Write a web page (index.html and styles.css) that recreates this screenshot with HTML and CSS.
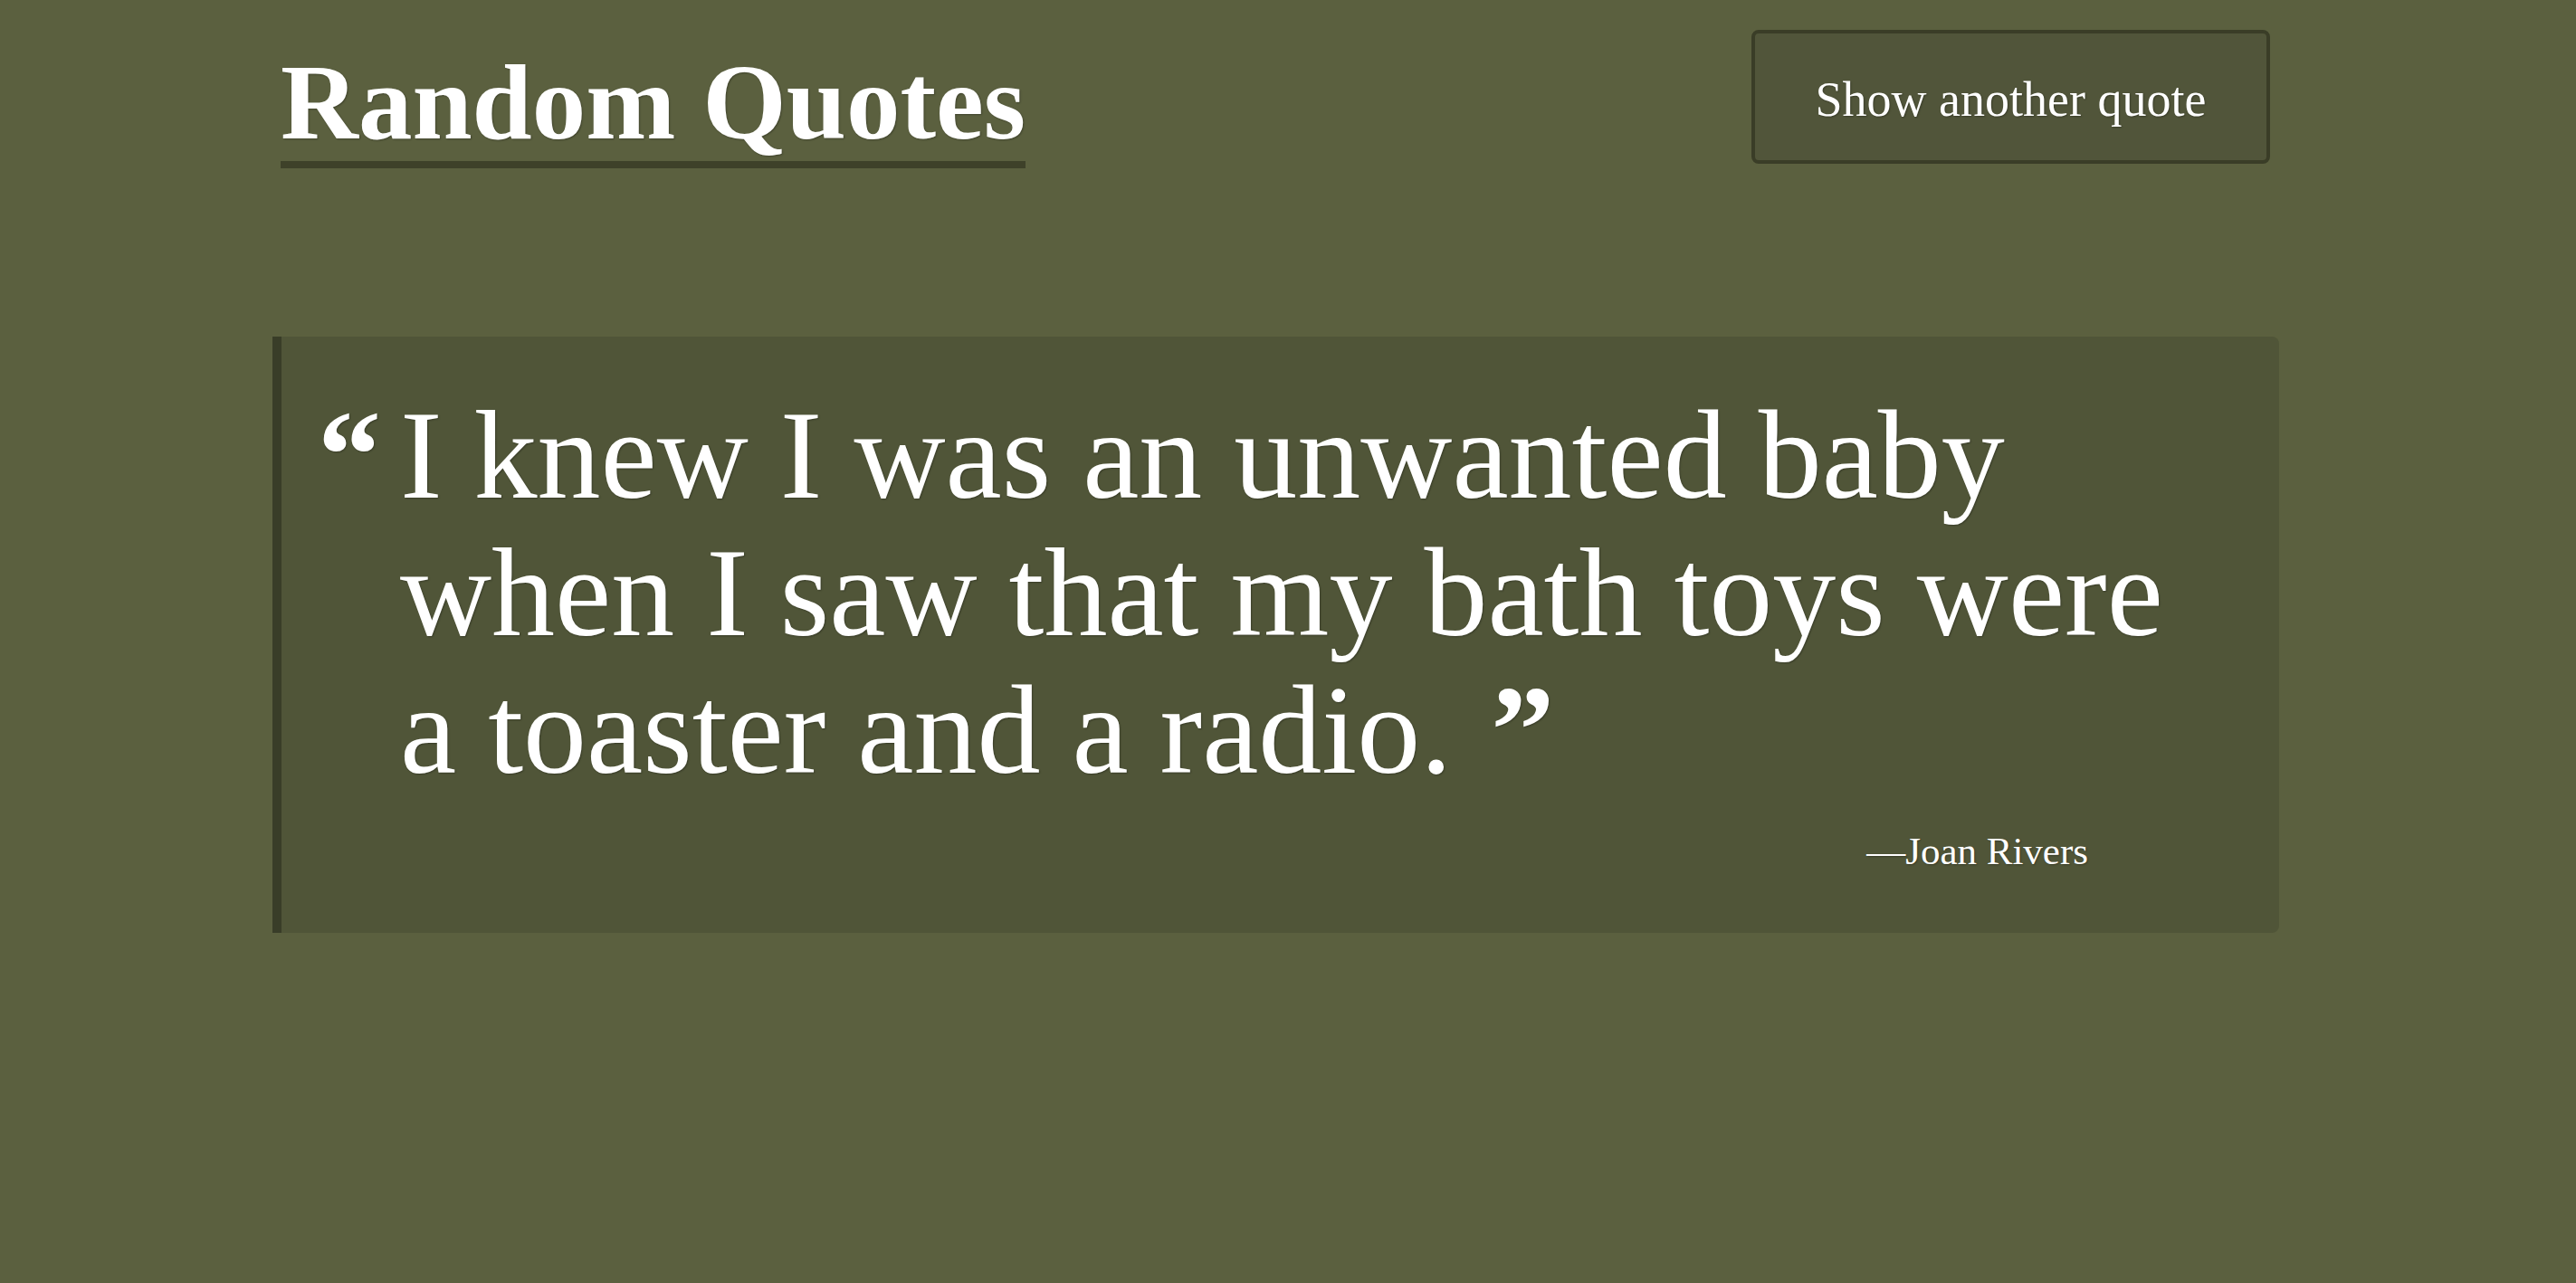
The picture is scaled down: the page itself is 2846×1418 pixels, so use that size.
FILE: index.html
```html
<!DOCTYPE html>
<html lang="en">
<head>
<meta charset="utf-8">
<title>Random Quotes</title>
<link rel="stylesheet" href="styles.css">
</head>
<body>
<div class="page">
  <header class="header">
    <h1 class="title">Random Quotes</h1>
    <button class="btn" type="button">Show another quote</button>
  </header>
  <section class="card">
    <div class="quote-row">
      <span class="open-mark">“</span>
      <p class="quote-text">I knew I was an unwanted baby when I saw that my bath toys were a toaster and a radio. <span class="close-mark">”</span></p>
    </div>
    <p class="author">—Joan Rivers</p>
  </section>
</div>
</body>
</html>
```

FILE: styles.css
```css
html, body {
  margin: 0;
  padding: 0;
}

body {
  background: #5b603f;
  color: #ffffff;
  font-family: "Liberation Serif", "Times New Roman", serif;
  min-height: 1418px;
}

.page {
  width: 2217px;
  margin-left: 301px;
  padding-top: 33px;
}

.header {
  display: flex;
  justify-content: space-between;
  align-items: flex-start;
  padding: 0 10px 0 9px;
}

.title {
  margin: 21px 0 0 0;
  font-size: 119px;
  line-height: 119px;
  font-weight: 700;
  padding-bottom: 5px;
  border-bottom: 8px solid #3e4129;
  text-shadow: 1px 1px 2px rgba(0, 0, 0, 0.3);
}

.btn {
  width: 573px;
  height: 148px;
  box-sizing: border-box;
  background: #51553a;
  border: 4px solid #3a3d27;
  border-radius: 8px;
  color: #ffffff;
  font-family: "Liberation Serif", "Times New Roman", serif;
  font-size: 54px;
  padding: 6px 0 0 0;
  text-shadow: 1px 1px 2px rgba(0, 0, 0, 0.3);
  cursor: pointer;
}

.card {
  margin-top: 186px;
  background: #505538;
  border-left: 10px solid #393d28;
  border-radius: 0 8px 8px 0;
  padding: 55px 68px 64px 40px;
  text-shadow: 1px 1px 2px rgba(0, 0, 0, 0.3);
}

.quote-row {
  display: flex;
  align-items: baseline;
  gap: 21px;
}

.open-mark,
.close-mark {
  font-weight: 700;
}

.open-mark {
  font-size: 140px;
  line-height: 152px;
}

.quote-text {
  margin: 0;
  flex: 1;
  font-size: 140px;
  line-height: 152px;
}

.close-mark {
  margin-left: 8px;
}

.author {
  margin: 32px 0 0 0;
  text-align: right;
  padding-right: 143px;
  font-size: 43px;
  line-height: 1.2;
}
```
